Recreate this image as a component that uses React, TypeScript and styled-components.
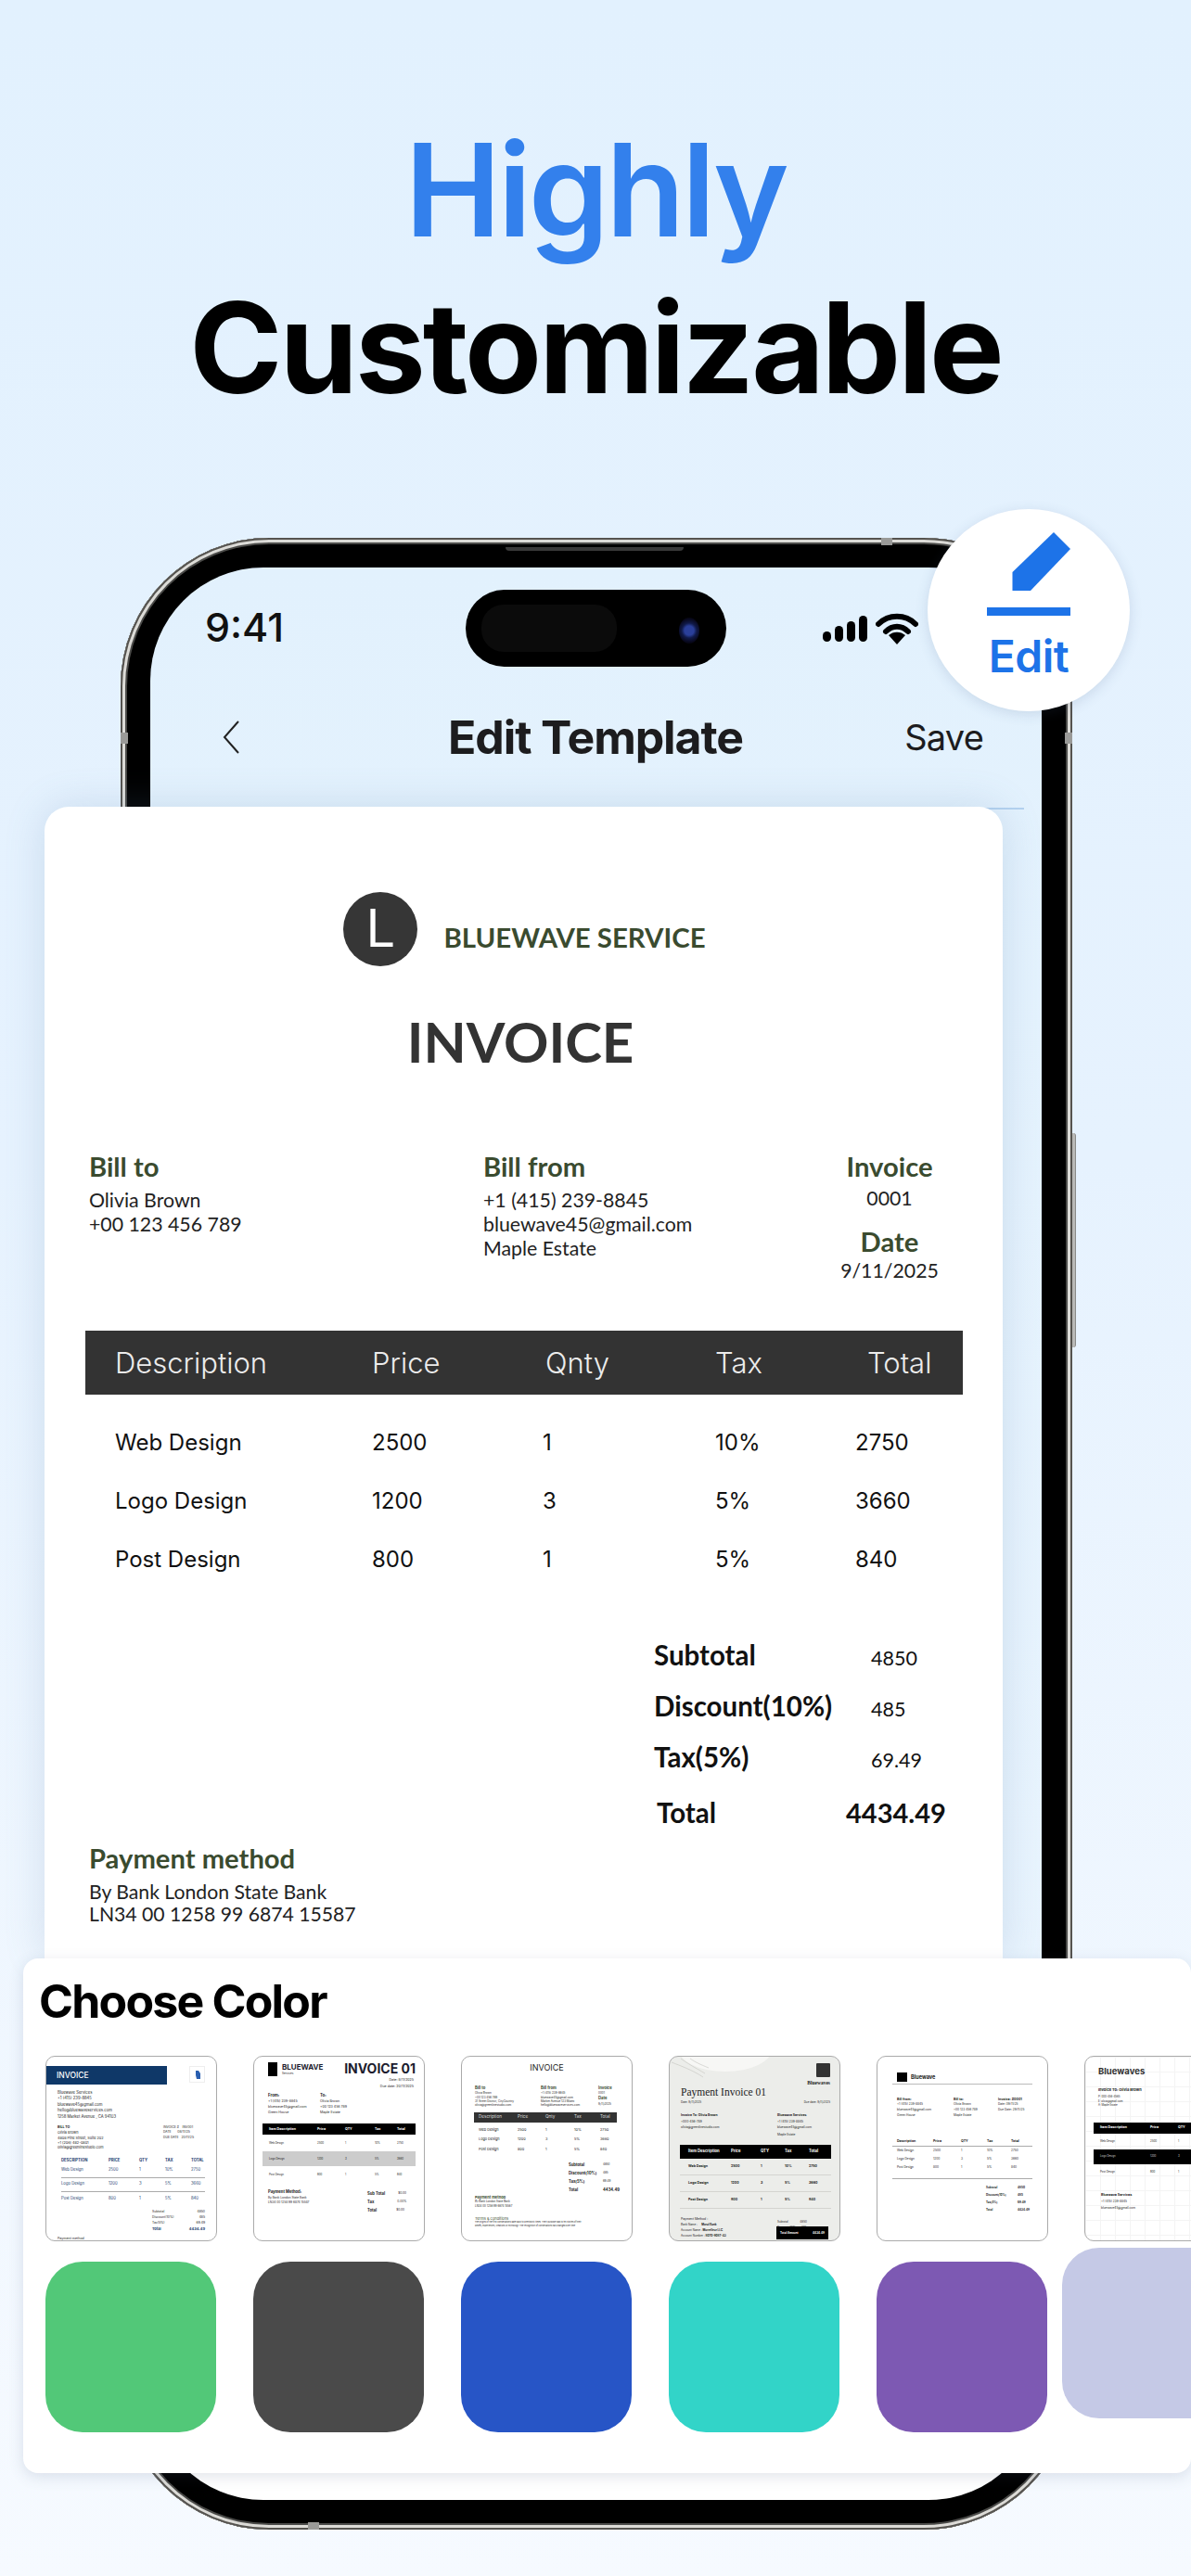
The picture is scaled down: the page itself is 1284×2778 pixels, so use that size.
import React from 'react';
import styled, { createGlobalStyle } from 'styled-components';

const GlobalStyle = createGlobalStyle`
  html, body {
    margin: 0;
    padding: 0;
    background: #eef6fe;
  }
  * {
    box-sizing: border-box;
  }
`;

const INTER = `Inter, "Liberation Sans", sans-serif`;
const SOFT = `Lato, "Noto Sans", sans-serif`;
const GREEN = '#3a4b2f';

/* PAGE */
const Page = styled.div`
  width: 1284px;
  height: 2778px;
  overflow: hidden;
  background: linear-gradient(180deg, #e2f1fe 0%, #e6f2fe 45%, #f6faff 100%);
  font-family: ${INTER};
`;

const Headline = styled.h1`
  margin: 0;
  padding-top: 120px;
  text-align: center;
  font-size: 135.5px;
  line-height: 170px;
  font-weight: 700;
  letter-spacing: -3px;
  color: #000;
  span {
    display: block;
    font-size: 139px;
    letter-spacing: -3.4px;
    color: #3380ec;
    font-weight: 600;
  }
`;

/* PHONE */
const Phone = styled.div`
  position: relative;
  width: 1026px;
  height: 2148px;
  margin: 120px 0 0 130px;
  padding: 32px 33px 32px 32px;
  border-radius: 160px;
  background: #000;
  box-shadow: inset 0 0 0 2px #55534f, inset 0 0 0 5px #dcdbd7, inset 0 0 0 7px #4a4a48, inset 0 0 0 9px #000;
`;

const Speaker = styled.div`
  position: absolute;
  top: 10px;
  left: 415px;
  width: 192px;
  height: 4px;
  border-radius: 0 0 4px 4px;
  background: #3a3a3a;
`;

const Band = styled.div<{ $spot: 'top' | 'bottom' | 'left' | 'right' }>`
  position: absolute;
  background: #9a9a98;
  ${(p) => p.$spot === 'top' && 'top: 0; left: 820px; width: 12px; height: 8px;'}
  ${(p) => p.$spot === 'bottom' && 'bottom: 0; left: 202px; width: 12px; height: 8px;'}
  ${(p) => p.$spot === 'left' && 'left: 0; top: 210px; width: 8px; height: 12px;'}
  ${(p) => p.$spot === 'right' && 'right: 0; top: 210px; width: 8px; height: 12px;'}
`;

const SideKey = styled.div`
  position: absolute;
  right: -4px;
  top: 642px;
  width: 4px;
  height: 231px;
  border-radius: 0 3px 3px 0;
  background: #b9b9b7;
  border-right: 1px solid #8a8a88;
`;

const Screen = styled.div`
  position: relative;
  display: flex;
  flex-direction: column;
  width: 961px;
  height: 2084px;
  border-radius: 122px;
  background: linear-gradient(180deg, #e2f1fd 0%, #ebf5fe 97%, #fff 97%);
`;

const StatusBar = styled.div`
  display: grid;
  grid-template-columns: 340px 281px auto;
  align-items: center;
  height: 83px;
  margin-top: 24px;
`;

const Clock = styled.div`
  padding: 0 0 4px 59px;
  font-size: 43px;
  font-weight: 500;
  color: #111;
`;

const Island = styled.div`
  position: relative;
  height: 83px;
  border-radius: 42px;
  background: #000;
`;

const IslandPill = styled.div`
  position: absolute;
  left: 17px;
  top: 16px;
  width: 146px;
  height: 51px;
  border-radius: 24px;
  background: #0b0b0b;
`;

const Lens = styled.div`
  position: absolute;
  left: 230px;
  top: 30px;
  width: 22px;
  height: 28px;
  border-radius: 50%;
  background: radial-gradient(circle, #2a3f9a 0 28%, #101a4a 45%, #08081c 70%, #000 100%);
`;

const StatusIcons = styled.div`
  display: flex;
  align-items: center;
  gap: 9px;
  margin-left: 104px;
`;

const NavBar = styled.div`
  display: grid;
  grid-template-columns: 245px auto 1fr;
  align-items: center;
  height: 52px;
  margin-top: 50px;
  padding: 0 63px 0 78px;
`;

const NavTitle = styled.div`
  margin-left: -2px;
  font-size: 50px;
  line-height: 52px;
  font-weight: 700;
  letter-spacing: -1.1px;
  color: #1c1c1e;
`;

const NavSave = styled.div`
  justify-self: end;
  font-size: 38px;
  font-weight: 400;
  letter-spacing: -0.8px;
  color: #1c1c1e;
`;

const SheetEdge = styled.div`
  position: absolute;
  top: 259px;
  right: 19px;
  width: 60px;
  height: 2px;
  background: #b4d2f0;
`;

const EditBadge = styled.div`
  position: absolute;
  left: 870px;
  top: -31px;
  width: 218px;
  height: 218px;
  display: flex;
  flex-direction: column;
  align-items: center;
  padding-top: 25px;
  border-radius: 50%;
  background: #fff;
  box-shadow: 0 3px 14px rgba(60, 90, 130, 0.16);
  z-index: 3;
`;

const EditLabel = styled.div`
  margin-top: 18px;
  font-size: 48px;
  line-height: 52px;
  font-weight: 600;
  letter-spacing: -0.5px;
  color: #1d73e8;
`;

/* INVOICE CARD */
const Card = styled.div`
  flex: none;
  width: 1033px;
  height: 1242px;
  margin: 49px 0 0 -114px;
  padding-top: 92px;
  border-radius: 26px 26px 0 0;
  background: #fff;
  box-shadow: 0 0 44px rgba(90, 130, 170, 0.2);
  font-family: ${SOFT};
  position: relative;
`;

const Brand = styled.div`
  display: flex;
  justify-content: center;
  gap: 28px;
  height: 80px;
  padding-left: 2px;
`;

const BrandMark = styled.div`
  width: 80px;
  height: 80px;
  border-radius: 50%;
  background: #363636;
  color: #fff;
  text-align: center;
  font-family: ${INTER};
  font-size: 56px;
  font-weight: 400;
  line-height: 78px;
`;

const BrandName = styled.div`
  align-self: flex-end;
  margin-bottom: 13px;
  font-size: 29.4px;
  font-weight: 700;
  line-height: 36px;
  color: ${GREEN};
`;

const InvoiceTitle = styled.div`
  margin-top: 46px;
  padding-right: 7px;
  text-align: center;
  font-size: 60px;
  line-height: 70px;
  font-weight: 700;
  color: #333;
`;

const BillGrid = styled.div`
  display: grid;
  grid-template-columns: 425px 363px 150px;
  margin-top: 82px;
  padding-left: 48px;
`;

const BillColumn = styled.div<{ $center?: boolean }>`
  text-align: ${(p) => (p.$center ? 'center' : 'left')};
`;

const BillHeading = styled.div<{ $gap?: number }>`
  margin-top: ${(p) => p.$gap || 0}px;
  font-size: 29.2px;
  line-height: 36px;
  font-weight: 700;
  color: ${GREEN};
`;

const BillLines = styled.div<{ $gap?: number }>`
  margin-top: ${(p) => p.$gap ?? 5}px;
  font-size: 21.3px;
  line-height: 26px;
  color: #222;
`;

const TableHead = styled.div`
  display: grid;
  grid-template-columns: 277px 187px 183px 164px 1fr;
  align-items: center;
  width: 946px;
  height: 69px;
  margin: 52px 0 20px 44px;
  padding-left: 32px;
  background: #333;
  color: #ececec;
  font-family: ${INTER};
  font-size: 31px;
  font-weight: 300;
`;

const TableRow = styled.div`
  display: grid;
  grid-template-columns: 277px 184px 186px 151px 1fr;
  align-items: center;
  height: 63px;
  margin-left: 76px;
  font-family: ${INTER};
  font-size: 24px;
  font-weight: 400;
  color: #111;
`;

const Totals = styled.div`
  margin: 44px 0 0 657px;
`;

const TotalRow = styled.div<{ $grand?: boolean }>`
  display: grid;
  grid-template-columns: ${(p) => (p.$grand ? '204px 1fr' : '234px 1fr')};
  align-items: baseline;
  height: 55px;
  line-height: 55px;
  margin: ${(p) => (p.$grand ? '5px 0 0 3px' : '0')};
  font-size: 29.5px;
  font-weight: 700;
  color: #111;
`;

const TotalValue = styled.div<{ $grand?: boolean }>`
  font-size: ${(p) => (p.$grand ? 29 : 21.5)}px;
  font-weight: ${(p) => (p.$grand ? 700 : 400)};
`;

const Payment = styled.div`
  margin: 4px 0 0 48px;
`;

const PaymentLines = styled.div`
  margin-top: 6px;
  font-size: 21.2px;
  line-height: 24px;
  color: #222;
`;

/* CHOOSE COLOR PANEL */
const Panel = styled.div`
  flex: none;
  position: relative;
  width: 1259px;
  height: 555px;
  margin-left: -137px;
  padding: 16px 0 0 24px;
  border-radius: 16px;
  background: #fff;
  box-shadow: 0 4px 16px rgba(70, 90, 120, 0.16);
  overflow: hidden;
`;

const PanelTitle = styled.div`
  margin-left: -7px;
  font-size: 50px;
  line-height: 60px;
  font-weight: 700;
  letter-spacing: -1.8px;
  color: #000;
`;

const ThumbRow = styled.div`
  display: flex;
  gap: 39px;
  margin-top: 29px;
`;

const SwatchRow = styled.div`
  display: flex;
  gap: 40px;
  margin-top: 22px;
`;

const Swatch = styled.div<{ $color: string; $lifted?: boolean }>`
  flex: none;
  width: 184px;
  height: 184px;
  border-radius: 40px;
  background: ${(p) => p.$color};
  ${(p) => p.$lifted && 'margin: -15px 0 0 -24px; width: 200px;'}
`;

/* TEMPLATE THUMBNAILS */
const Thumb = styled.div<{ $bg?: string }>`
  flex: none;
  position: relative;
  width: 185px;
  height: 200px;
  border: 1.5px solid #aaa;
  border-radius: 10px;
  background: ${(p) => p.$bg || '#fff'};
  overflow: hidden;
  font-family: ${INTER};
  color: #222;
`;

const Mini = styled.div<{ $s?: number; $b?: boolean; $c?: string; $l?: number; $m?: string; $serif?: boolean; $a?: string }>`
  font-size: ${(p) => p.$s || 4.5}px;
  font-weight: ${(p) => (p.$b ? 700 : 400)};
  color: ${(p) => p.$c || 'inherit'};
  line-height: ${(p) => p.$l || 6.4}px;
  margin: ${(p) => p.$m || '0'};
  text-align: ${(p) => p.$a || 'left'};
  white-space: nowrap;
  ${(p) => p.$serif && `font-family: "Liberation Serif", serif;`}
`;

const MiniSplit = styled.div<{ $cols: string; $m?: string; $bg?: string; $c?: string; $h?: number; $line?: string }>`
  display: grid;
  grid-template-columns: ${(p) => p.$cols};
  align-items: center;
  margin: ${(p) => p.$m || '0'};
  background: ${(p) => p.$bg || 'transparent'};
  color: ${(p) => p.$c || 'inherit'};
  ${(p) => p.$h && `height: ${p.$h}px;`}
  ${(p) => p.$line && `border-bottom: 1px solid ${p.$line};`}
`;

const MiniColumn = styled.div`
  align-self: start;
`;

const BlueBar = styled.div`
  width: 130px;
  height: 20px;
  padding-left: 11px;
  background: #0f3868;
  color: #fff;
  font-size: 8.5px;
  font-weight: 500;
  line-height: 20px;
`;

const MiniHeadRow = styled.div`
  display: flex;
  align-items: flex-start;
  justify-content: space-between;
  padding: 10px 12px 0 0;
`;

const MiniLogoCard = styled.div`
  display: flex;
  justify-content: center;
  padding-top: 4px;
  width: 17px;
  height: 18px;
  border: 1px solid #eee;
  svg {
    display: block;
  }
`;

const MiniBody = styled.div`
  padding: 6px 12px 0;
`;

const LogoBlock = styled.div<{ $w: number; $h: number; $c?: string; $r?: number }>`
  flex: none;
  width: ${(p) => p.$w}px;
  height: ${(p) => p.$h}px;
  background: ${(p) => p.$c || '#000'};
  border-radius: ${(p) => p.$r || 0}px;
`;

const MiniFlex = styled.div<{ $gap?: number; $m?: string; $between?: boolean }>`
  display: flex;
  align-items: center;
  gap: ${(p) => p.$gap || 0}px;
  margin: ${(p) => p.$m || '0'};
  ${(p) => p.$between && 'justify-content: space-between;'}
`;

const TotalBox = styled.div`
  position: absolute;
  right: 12px;
  bottom: 1px;
  display: flex;
  justify-content: space-between;
  align-items: center;
  width: 56px;
  height: 14px;
  padding: 0 4px;
  background: #000;
  color: #fff;
  font-size: 3px;
  font-weight: 700;
`;

const LeafCorner = styled.svg`
  position: absolute;
  left: 0;
  top: 0;
`;

const Rule = styled.div<{ $m?: string; $c?: string }>`
  height: 1px;
  margin: ${(p) => p.$m || '0'};
  background: ${(p) => p.$c || '#aaa'};
`;

const GridPaper = styled(Thumb)`
  background-image: linear-gradient(#f4f4f4 1px, transparent 1px), linear-gradient(90deg, #f4f4f4 1px, transparent 1px);
  background-size: 16px 16px;
`;

const items = [
  ['Web Design', '2500', '1', '10%', '2750'],
  ['Logo Design', '1200', '3', '5%', '3660'],
  ['Post Design', '800', '1', '5%', '840'],
];

const swatches = ['#52c878', '#4a4a4a', '#2755c6', '#32d4c8', '#7d59b3'];

const MiniCells = ({ cells, ...rest }: { cells: string[]; $s?: number; $b?: boolean; $c?: string }) => (
  <>
    {cells.map((c) => (
      <Mini key={c} {...rest}>
        {c}
      </Mini>
    ))}
  </>
);

const ThumbOne = () => (
  <Thumb>
    <MiniHeadRow>
      <BlueBar>INVOICE</BlueBar>
      <MiniLogoCard>
        <svg width="6" height="9" viewBox="0 0 6 9">
          <path d="M1 0h3l2 3v6H2L1 5z" fill="#2a5fb0" />
        </svg>
      </MiniLogoCard>
    </MiniHeadRow>
    <MiniBody>
      <Mini $s={4.2}>Bluewave Services</Mini>
      <Mini $s={4.2}>+1 (415) 239-8845</Mini>
      <Mini $s={4.2}>bluewave45@gmail.com</Mini>
      <Mini $s={4.2}>hello@bluewaveservices.com</Mini>
      <Mini $s={4.2}>1258 Market Avenue , CA 94103</Mini>
      <MiniSplit $cols="114px 1fr" $m="5px 0 0">
        <div>
          <Mini $s={3.6} $b>BILL TO</Mini>
          <Mini $s={3.8} $l={5.2}>Olivia Brown</Mini>
          <Mini $s={3.8} $l={5.2}>4808 Pine Street, Suite 202</Mini>
          <Mini $s={3.8} $l={5.2}>+1 (206) 482-0801</Mini>
          <Mini $s={3.8} $l={5.2}>olivia@greenlinestudio.com</Mini>
        </div>
        <MiniColumn>
          <Mini $s={3.4}>INVOICE # &nbsp;&nbsp; INV001</Mini>
          <Mini $s={3.4} $l={5.2}>DATE &nbsp;&nbsp;&nbsp;&nbsp;&nbsp; 08/11/25</Mini>
          <Mini $s={3.4} $l={5.2}>DUE DATE &nbsp; 20/11/25</Mini>
        </MiniColumn>
      </MiniSplit>
      <MiniSplit $cols="51px 33px 28px 28px 1fr" $m="9px 0 0 4px" $c="#1c3e70">
        <MiniCells cells={['DESCRIPTION', 'PRICE', 'QTY', 'TAX', 'TOTAL']} $s={4.2} $b />
      </MiniSplit>
      {items.map((row, i) => (
        <MiniSplit key={row[0]} $cols="51px 33px 28px 28px 1fr" $m="0 0 0 4px" $h={15} $c="#1c3e70" $line={i < 2 ? '#aaa' : undefined}>
          <MiniCells cells={row} $s={4.2} />
        </MiniSplit>
      ))}
      <MiniSplit $cols="32px 1fr" $m="3px 0 0 102px">
        <Mini $s={3.4}>Subtotal</Mini>
        <Mini $s={3.4} $a="right">4850</Mini>
        <Mini $s={3.4}>Discount(10%)</Mini>
        <Mini $s={3.4} $a="right">485</Mini>
        <Mini $s={3.4}>Tax(5%)</Mini>
        <Mini $s={3.4} $a="right">69.49</Mini>
        <Mini $s={4} $b $c="#1c3e70">Total</Mini>
        <Mini $s={4} $b $c="#1c3e70" $a="right">4434.49</Mini>
      </MiniSplit>
      <Mini $s={3.6} $m="4px 0 0">Payment method</Mini>
    </MiniBody>
  </Thumb>
);

const ThumbTwo = () => (
  <Thumb>
    <MiniFlex $between $m="5px 9px 0 15px">
      <MiniFlex $gap={5}>
        <LogoBlock $w={10} $h={15} />
        <div>
          <Mini $s={8} $b $l={9} $c="#1c1c2e">BLUEWAVE</Mini>
          <Mini $s={3} $l={4}>Services</Mini>
        </div>
      </MiniFlex>
      <Mini $s={14} $b $l={16} $c="#1c1c2e">INVOICE 01</Mini>
    </MiniFlex>
    <Mini $s={3.6} $l={7} $a="right" $m="1px 11px 0 0">Date: 8/11/2025</Mini>
    <Mini $s={3.6} $l={7} $a="right" $m="0 11px 0 0">Due date: 20/11/2025</Mini>
    <MiniSplit $cols="56px 1fr" $m="3px 0 0 15px">
      <div>
        <Mini $s={4.4} $b>From:</Mini>
        <Mini $s={3.6} $l={6}>+1 (415) 239-8845</Mini>
        <Mini $s={3.6} $l={6}>bluewave45@gmail.com</Mini>
        <Mini $s={3.6} $l={6}>Green House</Mini>
      </div>
      <div>
        <Mini $s={4.4} $b>To:</Mini>
        <Mini $s={3.6} $l={6}>Olivia Brown</Mini>
        <Mini $s={3.6} $l={6}>+00 123 456 789</Mini>
        <Mini $s={3.6} $l={6}>Maple Estate</Mini>
      </div>
    </MiniSplit>
    <MiniSplit $cols="59px 30px 32px 24px 1fr" $m="9px 9px 0" $bg="#000" $c="#fff" $h={12}>
      <Mini $s={3.6} $b $m="0 0 0 7px">Item Description</Mini>
      <MiniCells cells={['Price', 'QTY', 'Tax', 'Total']} $s={3.6} $b />
    </MiniSplit>
    {items.map((row, i) => (
      <MiniSplit key={row[0]} $cols="59px 30px 32px 24px 1fr" $m="0 9px" $h={i === 1 ? 16 : 18} $bg={i === 1 ? '#ccc' : undefined}>
        <Mini $s={2.8} $m="0 0 0 7px">{row[0]}</Mini>
        <MiniCells cells={row.slice(1)} $s={2.8} />
      </MiniSplit>
    ))}
    <MiniSplit $cols="107px 1fr" $m="7px 0 0 15px">
      <MiniColumn>
        <Mini $s={4.2} $b>Payment Method:</Mini>
        <Mini $s={3.2} $l={5}>By Bank London State Bank</Mini>
        <Mini $s={3.2} $l={5}>LN34 00 1258 99 6874 15587</Mini>
      </MiniColumn>
      <div>
        <MiniFlex $gap={14}><Mini $s={4.2} $b $l={9}>Sub Total</Mini><Mini $s={3.2} $l={9}>$0.00</Mini></MiniFlex>
        <MiniFlex $gap={25}><Mini $s={4.2} $b $l={9}>Tax</Mini><Mini $s={3.2} $l={9}>0.00%</Mini></MiniFlex>
        <MiniFlex $gap={21}><Mini $s={4.2} $b $l={9}>Total</Mini><Mini $s={3.2} $l={9}>$0.00</Mini></MiniFlex>
      </div>
    </MiniSplit>
  </Thumb>
);

const ThumbThree = () => (
  <Thumb>
    <Mini $s={9} $l={12} $a="center" $m="6px 0 0">INVOICE</Mini>
    <MiniSplit $cols="71px 62px 1fr" $m="13px 0 0 14px">
      <MiniColumn>
        <Mini $s={4.2} $c={GREEN} $b>Bill to</Mini>
        <Mini $s={3} $l={4.3}>Olivia Brown</Mini>
        <Mini $s={3} $l={4.3}>+00 123 456 789</Mini>
        <Mini $s={3} $l={4.3}>31 Street District, CityCountry</Mini>
        <Mini $s={3} $l={4.3}>olivia@greenlinestudio.com</Mini>
      </MiniColumn>
      <MiniColumn>
        <Mini $s={4.2} $c={GREEN} $b>Bill from</Mini>
        <Mini $s={3} $l={4.3}>+1 (415) 239-8845</Mini>
        <Mini $s={3} $l={4.3}>bluewave45@gmail.com</Mini>
        <Mini $s={3} $l={4.3}>Market Avenue 123 Miami</Mini>
        <Mini $s={3} $l={4.3}>hello@bluewaveservices.com</Mini>
      </MiniColumn>
      <MiniColumn>
        <Mini $s={4.2} $c={GREEN} $b>Invoice</Mini>
        <Mini $s={3} $l={5}>0001</Mini>
        <Mini $s={4.2} $c={GREEN} $b>Date</Mini>
        <Mini $s={3} $l={5}>9/11/2025</Mini>
      </MiniColumn>
    </MiniSplit>
    <MiniSplit $cols="47px 30px 31px 28px 1fr" $m="5px 16px 3px 13px" $bg="#333" $c="#ddd" $h={11}>
      <Mini $s={4.6} $m="0 0 0 5px">Description</Mini>
      <MiniCells cells={['Price', 'Qnty', 'Tax', 'Total']} $s={4.6} />
    </MiniSplit>
    {items.map((row) => (
      <MiniSplit key={row[0]} $cols="47px 30px 31px 28px 1fr" $m="0 16px 0 13px" $h={10.5}>
        <Mini $s={3.8} $m="0 0 0 5px">{row[0]}</Mini>
        <MiniCells cells={row.slice(1)} $s={3.8} />
      </MiniSplit>
    ))}
    <MiniSplit $cols="37px 1fr" $m="7px 0 0 115px">
      <Mini $s={4.2} $b $l={9}>Subtotal</Mini>
      <Mini $s={3} $l={9}>4850</Mini>
      <Mini $s={4.2} $b $l={9}>Discount(10%)</Mini>
      <Mini $s={3} $l={9}>485</Mini>
      <Mini $s={4.2} $b $l={9}>Tax(5%)</Mini>
      <Mini $s={3} $l={9}>69.49</Mini>
      <Mini $s={4.2} $b $l={10}>Total</Mini>
      <Mini $s={4.2} $b $l={10}>4434.49</Mini>
    </MiniSplit>
    <Mini $s={4} $b $c={GREEN} $l={5} $m="0 0 0 14px">Payment method</Mini>
    <Mini $s={2.9} $l={4.6} $m="0 0 0 14px">By Bank London State Bank</Mini>
    <Mini $s={2.9} $l={4.6} $m="0 0 0 14px">LN34 00 1258 99 6874 15587</Mini>
    <Mini $s={4} $c={GREEN} $l={5} $m="9px 0 0 14px">Terms &amp; conditions</Mini>
    <Mini $s={2.25} $l={4} $m="0 0 0 14px">The origins of the first constellations date back to prehistoric times. Their purpose was to tell stories of their</Mini>
    <Mini $s={2.25} $l={4} $m="0 0 0 14px">beliefs, experiences, creations or mythology. The recognition of constellations has changed over time.</Mini>
  </Thumb>
);

const ThumbFour = () => (
  <Thumb $bg="#ecedea">
    <LeafCorner width="110" height="24" viewBox="0 0 110 24">
      <ellipse cx="60" cy="-8" rx="50" ry="24" fill="#f7f7f5" />
      <path d="M2 6 C12 10 24 14 36 22 M12 2 C20 8 28 12 38 18 M22 2 C28 6 32 8 42 12" stroke="#c4c5c0" strokeWidth="0.6" fill="none" />
    </LeafCorner>
    <MiniFlex $between $m="7px 10px 0 12px">
      <span />
      <LogoBlock $w={15} $h={15} $c="#333" $r={1} />
    </MiniFlex>
    <Mini $s={5.5} $serif $b $a="right" $l={8} $m="2px 10px 0 0">Bluewaves</Mini>
    <Mini $s={11.5} $serif $l={12} $m="0 0 0 12px">Payment Invoice 01</Mini>
    <MiniFlex $between $m="2px 10px 0 12px">
      <Mini $s={3}>Date: 9/11/2025</Mini>
      <Mini $s={3}>Due date: 9/11/2025</Mini>
    </MiniFlex>
    <MiniSplit $cols="104px 1fr" $m="8px 0 0 12px">
      <MiniColumn>
        <Mini $s={3.4} $b>Invoice To: Olivia Brown</Mini>
        <Mini $s={3.2}>+000-456-789</Mini>
        <Mini $s={3.2}>olivia@greenlinestudio.com</Mini>
      </MiniColumn>
      <div>
        <Mini $s={3.4} $b>Bluewave Services</Mini>
        <Mini $s={3.2}>+1 (415) 239-8845</Mini>
        <Mini $s={3.2}>bluewave45@gmail.com</Mini>
        <Mini $s={3.2} $l={9}>Maple Estate</Mini>
      </div>
    </MiniSplit>
    <MiniSplit $cols="55px 32px 26px 26px 1fr" $m="6px 9px 0 11px" $bg="#000" $c="#fff" $h={15}>
      <Mini $s={4.2} $b $m="0 0 0 9px">Item Description</Mini>
      <MiniCells cells={['Price', 'QTY', 'Tax', 'Total']} $s={4.2} $b />
    </MiniSplit>
    {items.map((row) => (
      <MiniSplit key={row[0]} $cols="55px 32px 26px 26px 1fr" $m="0 9px 0 11px" $h={18} $line="#d4d4d0">
        <Mini $s={3.6} $b $m="0 0 0 9px">{row[0]}</Mini>
        <MiniCells cells={row.slice(1)} $s={3.6} $b />
      </MiniSplit>
    ))}
    <MiniSplit $cols="104px 1fr" $m="8px 0 0 12px">
      <MiniColumn>
        <Mini $s={3.4} $l={6}>Payment Method :</Mini>
        <Mini $s={3} $l={6}>Bank Name : &nbsp;&nbsp;&nbsp; <b>Moral Bank</b></Mini>
        <Mini $s={3} $l={6}>Account Name : <b>Morrelleur LLC</b></Mini>
        <Mini $s={3} $l={6}>Account Number : <b>8070-9087-43</b></Mini>
      </MiniColumn>
      <div>
        <Mini $s={3} $l={6}>Subtotal &nbsp;&nbsp;&nbsp;&nbsp;&nbsp;&nbsp;&nbsp;&nbsp;&nbsp;&nbsp;&nbsp;&nbsp;&nbsp; 4850</Mini>
        <Mini $s={3} $l={6}>Discount(10%) &nbsp;&nbsp;&nbsp;&nbsp; 485</Mini>
        <Mini $s={3} $l={6}>Tax(5%) &nbsp;&nbsp;&nbsp;&nbsp;&nbsp;&nbsp;&nbsp;&nbsp;&nbsp;&nbsp;&nbsp; 69.49</Mini>
      </div>
    </MiniSplit>
    <TotalBox>
      <span>Total Amount</span>
      <span>4434.49</span>
    </TotalBox>
  </Thumb>
);

const ThumbFive = () => (
  <Thumb>
    <MiniFlex $gap={4} $m="17px 0 0 21px">
      <LogoBlock $w={11} $h={10} />
      <Mini $s={5.6} $b>Bluewave</Mini>
    </MiniFlex>
    <Rule $m="2px 16px 0" $c="#bbb" />
    <MiniSplit $cols="61px 48px 1fr" $m="13px 0 0 21px">
      <MiniColumn>
        <Mini $s={3.6} $b>Bill from:</Mini>
        <Mini $s={3.2} $l={5.8}>+1 (415) 239-8845</Mini>
        <Mini $s={3.2} $l={5.8}>bluewave45@gmail.com</Mini>
        <Mini $s={3.2} $l={5.8}>Green House</Mini>
      </MiniColumn>
      <MiniColumn>
        <Mini $s={3.6} $b>Bill to:</Mini>
        <Mini $s={3.2} $l={5.8}>Olivia Brown</Mini>
        <Mini $s={3.2} $l={5.8}>+00 123 456 789</Mini>
        <Mini $s={3.2} $l={5.8}>Maple Estate</Mini>
      </MiniColumn>
      <MiniColumn>
        <Mini $s={3.6} $b>Invoice: #0001</Mini>
        <Mini $s={3.2} $l={5.8}>Date: 09/11/25</Mini>
        <Mini $s={3.2} $l={5.8}>Due Date: 29/11/25</Mini>
      </MiniColumn>
    </MiniSplit>
    <MiniSplit $cols="44px 30px 28px 26px 1fr" $m="20px 16px 0" $h={10} $line="#aaa">
      <Mini $s={3.6} $b $m="0 0 0 5px">Description</Mini>
      <MiniCells cells={['Price', 'QTY', 'Tax', 'Total']} $s={3.6} $b />
    </MiniSplit>
    {items.map((row) => (
      <MiniSplit key={row[0]} $cols="44px 30px 28px 26px 1fr" $m="0 16px" $h={9}>
        <Mini $s={3.2} $m="0 0 0 5px">{row[0]}</Mini>
        <MiniCells cells={row.slice(1)} $s={3.2} />
      </MiniSplit>
    ))}
    <Rule $m="7px 16px 0" $c="#aaa" />
    <MiniSplit $cols="34px 1fr" $m="5px 0 0 117px">
      <Mini $s={3} $b $l={8}>Subtotal</Mini>
      <Mini $s={3} $b $l={8}>4850</Mini>
      <Mini $s={3} $b $l={8}>Discount(10%)</Mini>
      <Mini $s={3} $b $l={8}>485</Mini>
      <Mini $s={3} $b $l={8}>Tax(5%)</Mini>
      <Mini $s={3} $b $l={8}>69.49</Mini>
      <Mini $s={3} $b $l={8}>Total</Mini>
      <Mini $s={3} $b $l={8}>4434.49</Mini>
    </MiniSplit>
  </Thumb>
);

const ThumbSix = () => (
  <GridPaper>
    <Mini $s={9.5} $b $l={12} $c="#333" $m="10px 0 0 14px">Bluewaves</Mini>
    <Mini $s={4} $b $m="11px 0 2px 14px">Invoice To: Olivia Brown</Mini>
    <Mini $s={2.8} $l={4.4} $m="0 0 0 14px">P: 000-456-4565</Mini>
    <Mini $s={2.8} $l={4.4} $m="0 0 0 14px">E: olivia@gmail.com</Mini>
    <Mini $s={2.8} $l={4.4} $m="0 0 0 14px">A: Maple Estate</Mini>
    <MiniSplit $cols="61px 30px 1fr" $m="16px 0 0 9px" $bg="#000" $c="#fff" $h={12}>
      <Mini $s={3.6} $b $m="0 0 0 7px">Item Description</Mini>
      <MiniCells cells={['Price', 'QTY']} $s={3.6} $b />
    </MiniSplit>
    {items.map((row, i) => (
      <MiniSplit key={row[0]} $cols="61px 30px 1fr" $m="0 0 0 9px" $h={i === 1 ? 16 : 17} $bg={i === 1 ? '#000' : undefined} $c={i === 1 ? '#ccc' : undefined}>
        <Mini $s={2.8} $m="0 0 0 7px">{row[0]}</Mini>
        <MiniCells cells={row.slice(1, 3)} $s={2.8} />
      </MiniSplit>
    ))}
    <Mini $s={3.6} $b $m="13px 0 0 17px" $l={7}>Bluewave Services</Mini>
    <Mini $s={3.2} $l={7} $m="0 0 0 17px">+1 (415) 239-8845</Mini>
    <Mini $s={3.2} $l={7} $m="0 0 0 17px">bluewave45@gmail.com</Mini>
  </GridPaper>
);

const App: React.FC = () => {
  return (
    <Page>
      <GlobalStyle />
      <Headline>
        <span>Highly</span>
        Customizable
      </Headline>

      <Phone>
        <Speaker />
        <Band $spot="top" />
        <Band $spot="bottom" />
        <Band $spot="left" />
        <Band $spot="right" />
        <SideKey />

        <EditBadge>
          <svg width="90" height="90" viewBox="0 0 90 90">
            <path d="M72 0 L90 18 L47 63 L27.5 63 L27.5 43 Z" fill="#1d73e8" />
            <rect x="0" y="81" width="90" height="9" fill="#1d73e8" />
          </svg>
          <EditLabel>Edit</EditLabel>
        </EditBadge>

        <Screen>
          <StatusBar>
            <Clock>9:41</Clock>
            <Island>
              <IslandPill />
              <Lens />
            </Island>
            <StatusIcons>
              <svg width="48" height="28" viewBox="0 0 48 28">
                <rect x="0" y="17" width="9" height="11" rx="4.5" fill="#000" />
                <rect x="13" y="11" width="9" height="17" rx="4.5" fill="#000" />
                <rect x="26" y="6" width="9" height="22" rx="4.5" fill="#000" />
                <rect x="39" y="0" width="9" height="28" rx="4.5" fill="#000" />
              </svg>
              <svg width="46" height="34" viewBox="0 0 46 34">
                <path d="M3 12 C14 1 32 1 43 12" stroke="#000" strokeWidth="6" fill="none" strokeLinecap="round" />
                <path d="M11 20 C18 13 28 13 35 20" stroke="#000" strokeWidth="6" fill="none" strokeLinecap="round" />
                <path d="M14 24 C19 19.5 27 19.5 32 24 L23 34 Z" fill="#000" />
              </svg>
            </StatusIcons>
          </StatusBar>

          <NavBar>
            <svg width="18" height="36" viewBox="0 0 18 36">
              <path d="M17 1 L2 18 L17 35" stroke="#222" strokeWidth="2" fill="none" />
            </svg>
            <NavTitle>Edit Template</NavTitle>
            <NavSave>Save</NavSave>
          </NavBar>

          <SheetEdge />

          <Card>
            <Brand>
              <BrandMark>L</BrandMark>
              <BrandName>BLUEWAVE SERVICE</BrandName>
            </Brand>
            <InvoiceTitle>INVOICE</InvoiceTitle>

            <BillGrid>
              <BillColumn>
                <BillHeading>Bill to</BillHeading>
                <BillLines>
                  Olivia Brown
                  <br />
                  +00 123 456 789
                </BillLines>
              </BillColumn>
              <BillColumn>
                <BillHeading>Bill from</BillHeading>
                <BillLines>
                  +1 (415) 239-8845
                  <br />
                  bluewave45@gmail.com
                  <br />
                  Maple Estate
                </BillLines>
              </BillColumn>
              <BillColumn $center>
                <BillHeading>Invoice</BillHeading>
                <BillLines $gap={3}>0001</BillLines>
                <BillHeading $gap={16}>Date</BillHeading>
                <BillLines $gap={0}>9/11/2025</BillLines>
              </BillColumn>
            </BillGrid>

            <TableHead>
              <div>Description</div>
              <div>Price</div>
              <div>Qnty</div>
              <div>Tax</div>
              <div>Total</div>
            </TableHead>
            {items.map((row) => (
              <TableRow key={row[0]}>
                {row.map((cell) => (
                  <div key={cell}>{cell}</div>
                ))}
              </TableRow>
            ))}

            <Totals>
              <TotalRow>
                <div>Subtotal</div>
                <TotalValue>4850</TotalValue>
              </TotalRow>
              <TotalRow>
                <div>Discount(10%)</div>
                <TotalValue>485</TotalValue>
              </TotalRow>
              <TotalRow>
                <div>Tax(5%)</div>
                <TotalValue>69.49</TotalValue>
              </TotalRow>
              <TotalRow $grand>
                <div>Total</div>
                <TotalValue $grand>4434.49</TotalValue>
              </TotalRow>
            </Totals>

            <Payment>
              <BillHeading>Payment method</BillHeading>
              <PaymentLines>
                By Bank London State Bank
                <br />
                LN34 00 1258 99 6874 15587
              </PaymentLines>
            </Payment>
          </Card>

          <Panel>
            <PanelTitle>Choose Color</PanelTitle>
            <ThumbRow>
              <ThumbOne />
              <ThumbTwo />
              <ThumbThree />
              <ThumbFour />
              <ThumbFive />
              <ThumbSix />
            </ThumbRow>
            <SwatchRow>
              {swatches.map((color) => (
                <Swatch key={color} $color={color} />
              ))}
              <Swatch $color="#c5c9e6" $lifted />
            </SwatchRow>
          </Panel>
        </Screen>
      </Phone>
    </Page>
  );
};

export default App;
